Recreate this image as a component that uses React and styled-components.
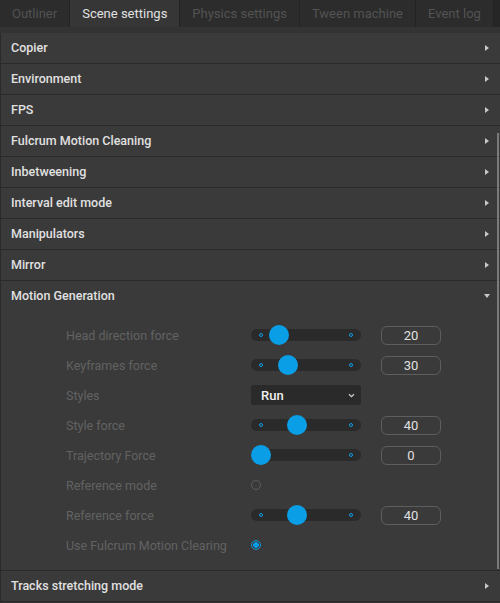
import React from "react";
import styled, { createGlobalStyle } from "styled-components";

const GlobalStyle = createGlobalStyle`
  html, body {
    margin: 0;
    padding: 0;
    background: #333333;
    font-family: Roboto, "Liberation Sans", sans-serif;
  }
`;

const tabs = [
  { label: "Outliner" },
  { label: "Scene settings", active: true },
  { label: "Physics settings" },
  { label: "Tween machine" },
  { label: "Event log" },
];

const sections = [
  "Copier",
  "Environment",
  "FPS",
  "Fulcrum Motion Cleaning",
  "Inbetweening",
  "Interval edit mode",
  "Manipulators",
  "Mirror",
];

const fields = [
  { label: "Head direction force", type: "slider", value: 20, pos: 28 },
  { label: "Keyframes force", type: "slider", value: 30, pos: 37 },
  { label: "Styles", type: "select", value: "Run" },
  { label: "Style force", type: "slider", value: 40, pos: 46 },
  { label: "Trajectory Force", type: "slider", value: 0, pos: 10, noMin: true },
  { label: "Reference mode", type: "radio" },
  { label: "Reference force", type: "slider", value: 40, pos: 46 },
  { label: "Use Fulcrum Motion Clearing", type: "radio", checked: true },
];

export default function App() {
  return (
    <Page>
      <GlobalStyle />
      <TabBar>
        {tabs.map((t) => (
          <Tab key={t.label} $active={t.active}>
            {t.label}
          </Tab>
        ))}
      </TabBar>
      <Panel>
        {sections.map((s) => (
          <SectionHeader key={s}>
            {s}
            <ArrowRight />
          </SectionHeader>
        ))}
        <SectionHeader $open>
          Motion Generation
          <ArrowDown />
        </SectionHeader>
        <SectionBody>
          {fields.map((f) => (
            <FieldRow key={f.label}>
              <FieldLabel>{f.label}</FieldLabel>
              {f.type === "slider" && (
                <>
                  <Slider>
                    {!f.noMin && <Dot style={{ left: 8 }} />}
                    <Dot style={{ right: 8 }} />
                    <Thumb style={{ left: f.pos }} />
                  </Slider>
                  <NumberBox>{f.value}</NumberBox>
                </>
              )}
              {f.type === "select" && (
                <Select>
                  {f.value}
                  <svg width="7" height="5" viewBox="0 0 7 5">
                    <path d="M1 1.2 L3.5 3.6 L6 1.2" fill="none" stroke="#ccc" strokeWidth="1.3" />
                  </svg>
                </Select>
              )}
              {f.type === "radio" && (
                <RadioCell>
                  <Radio $checked={f.checked} />
                </RadioCell>
              )}
            </FieldRow>
          ))}
        </SectionBody>
        <SectionHeader>
          Tracks stretching mode
          <ArrowRight />
        </SectionHeader>
        <ScrollThumb />
      </Panel>
    </Page>
  );
}

const Page = styled.div`
  width: 500px;
  height: 603px;
  overflow: hidden;
  background: #333333;
`;

const TabBar = styled.div`
  display: flex;
  height: 27px;
  background: #262626;
`;

const Tab = styled.div`
  display: flex;
  align-items: center;
  padding: 0 12px;
  font-size: 13px;
  color: ${(p) => (p.$active ? "#e2e2e2" : "#535353")};
  background: ${(p) => (p.$active ? "#363636" : "#2c2c2c")};
  border-right: 1px solid #232323;
  white-space: nowrap;
`;

const Panel = styled.div`
  position: relative;
  margin-top: 6px;
  border-left: 1px solid #2a2a2a;
  background: #3a3a3a;
`;

const SectionHeader = styled.div`
  display: flex;
  align-items: center;
  justify-content: space-between;
  box-sizing: border-box;
  height: 31px;
  padding: 0 11px 1px 10px;
  font-size: 12.5px;
  font-weight: 500;
  color: #e0e0e0;
  border-bottom: 1px solid ${(p) => (p.$open ? "transparent" : "#2a2a2a")};
`;

const ArrowRight = styled.span`
  width: 0;
  height: 0;
  border-top: 3.5px solid transparent;
  border-bottom: 3.5px solid transparent;
  border-left: 4px solid #c8c8c8;
`;

const ArrowDown = styled.span`
  width: 0;
  height: 0;
  border-left: 3.5px solid transparent;
  border-right: 3.5px solid transparent;
  border-top: 4px solid #c8c8c8;
  margin-right: -1px;
`;

const SectionBody = styled.div`
  padding: 8px 0 10px 65px;
  border-bottom: 1px solid #2a2a2a;
`;

const FieldRow = styled.div`
  display: grid;
  grid-template-columns: 165px 110px 60px;
  column-gap: 20px;
  align-items: center;
  height: 30px;
`;

const FieldLabel = styled.div`
  font-size: 12.5px;
  color: #626262;
  white-space: nowrap;
`;

const Slider = styled.div`
  position: relative;
  height: 12px;
  border-radius: 6px;
  background: #2a2a2a;
`;

const Dot = styled.span`
  position: absolute;
  top: 4px;
  width: 4px;
  height: 4px;
  box-sizing: border-box;
  border: 1px solid #0a9ee6;
  border-radius: 50%;
`;

const Thumb = styled.span`
  position: absolute;
  top: -4px;
  width: 20px;
  height: 20px;
  margin-left: -10px;
  border-radius: 50%;
  background: #0a9ee6;
`;

const NumberBox = styled.div`
  height: 19px;
  box-sizing: border-box;
  border: 1px solid #5e5e5e;
  border-radius: 6px;
  display: flex;
  align-items: center;
  justify-content: center;
  font-size: 13px;
  color: #e0e0e0;
`;

const Select = styled.div`
  height: 20px;
  border-radius: 3px;
  background: #2a2a2a;
  display: flex;
  align-items: center;
  justify-content: space-between;
  padding: 0 6px 0 10px;
  font-size: 13px;
  font-weight: 500;
  color: #f0f0f0;
`;

const RadioCell = styled.div`
  display: flex;
  align-items: center;
`;

const Radio = styled.span`
  width: 10px;
  height: 10px;
  box-sizing: border-box;
  border-radius: 50%;
  border: 1.5px solid ${(p) => (p.$checked ? "#0a9ee6" : "#5e5e5e")};
  background: ${(p) => (p.$checked ? "radial-gradient(circle, #0a9ee6 0 2.6px, transparent 3px)" : "transparent")};
`;

const ScrollThumb = styled.div`
  position: absolute;
  right: 1px;
  top: 100px;
  width: 2px;
  height: 436px;
  background: #7a7a7a;
`;
